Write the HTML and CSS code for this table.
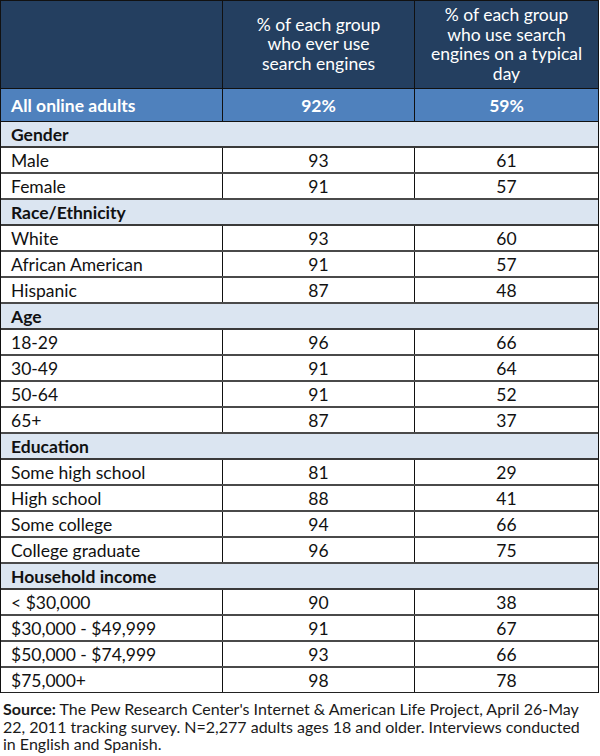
FILE: index.html
```html
<!DOCTYPE html>
<html>
<head>
<meta charset="utf-8">
<link rel="stylesheet" href="styles.css">
</head>
<body>
<div class="table">
  <div class="row head">
    <div class="cell"></div>
    <div class="cell">% of each group<br>who ever use<br>search engines</div>
    <div class="cell">% of each group<br>who use search<br>engines on a typical<br>day</div>
  </div>
  <div class="row total"><div class="cell">All online adults</div><div class="cell">92%</div><div class="cell">59%</div></div>
  <div class="row cat"><div class="cell">Gender</div></div>
  <div class="row"><div class="cell">Male</div><div class="cell">93</div><div class="cell">61</div></div>
  <div class="row"><div class="cell">Female</div><div class="cell">91</div><div class="cell">57</div></div>
  <div class="row cat"><div class="cell">Race/Ethnicity</div></div>
  <div class="row"><div class="cell">White</div><div class="cell">93</div><div class="cell">60</div></div>
  <div class="row"><div class="cell">African American</div><div class="cell">91</div><div class="cell">57</div></div>
  <div class="row"><div class="cell">Hispanic</div><div class="cell">87</div><div class="cell">48</div></div>
  <div class="row cat"><div class="cell">Age</div></div>
  <div class="row"><div class="cell">18-29</div><div class="cell">96</div><div class="cell">66</div></div>
  <div class="row"><div class="cell">30-49</div><div class="cell">91</div><div class="cell">64</div></div>
  <div class="row"><div class="cell">50-64</div><div class="cell">91</div><div class="cell">52</div></div>
  <div class="row"><div class="cell">65+</div><div class="cell">87</div><div class="cell">37</div></div>
  <div class="row cat"><div class="cell">Education</div></div>
  <div class="row"><div class="cell">Some high school</div><div class="cell">81</div><div class="cell">29</div></div>
  <div class="row"><div class="cell">High school</div><div class="cell">88</div><div class="cell">41</div></div>
  <div class="row"><div class="cell">Some college</div><div class="cell">94</div><div class="cell">66</div></div>
  <div class="row"><div class="cell">College graduate</div><div class="cell">96</div><div class="cell">75</div></div>
  <div class="row cat"><div class="cell">Household income</div></div>
  <div class="row"><div class="cell">&lt; $30,000</div><div class="cell">90</div><div class="cell">38</div></div>
  <div class="row"><div class="cell">$30,000 - $49,999</div><div class="cell">91</div><div class="cell">67</div></div>
  <div class="row"><div class="cell">$50,000 - $74,999</div><div class="cell">93</div><div class="cell">66</div></div>
  <div class="row last"><div class="cell">$75,000+</div><div class="cell">98</div><div class="cell">78</div></div>
</div>
<p class="source"><b>Source:</b> The Pew Research Center's Internet &amp; American Life Project, April 26-May 22, 2011 tracking survey. N=2,277 adults ages 18 and older. Interviews conducted in English and Spanish.</p>
</body>
</html>
```
FILE: styles.css
```css
html, body {
  margin: 0;
  padding: 0;
  background: #ffffff;
}
body {
  font-family: Lato, "Open Sans", "Liberation Sans", sans-serif;
  color: #111111;
  width: 600px;
}
.table {
  width: 599px;
  box-sizing: border-box;
  border: 1px solid #111;
  border-bottom: none;
  font-size: 17.5px;
}
.row {
  display: grid;
  grid-template-columns: 221px 192px 184px;
  height: 26px;
  box-sizing: border-box;
  border-bottom: 2px solid #4a4a4a;
}
.cell {
  display: flex;
  align-items: center;
  padding-left: 10px;
  white-space: nowrap;
}
.cell + .cell {
  justify-content: center;
  text-align: center;
  padding-left: 0;
  border-left: 1px solid #111;
}
.head {
  height: 88px;
  background: #243f60;
  color: #ffffff;
  border-bottom: 1px solid #111;
  line-height: 19.5px;
}
.head .cell + .cell {
  padding-bottom: 1px;
}
.total {
  height: 33px;
  background: #4f81bd;
  color: #ffffff;
  font-weight: bold;
  border-bottom: 1px solid #111;
}
.cat {
  display: flex;
  background: #dbe5f1;
  font-weight: bold;
  border-bottom: 2px solid #3a3a3a;
}
.last {
  border-bottom: 1px solid #222;
  height: 25px;
}
.source {
  margin: 7px 0 0 3px;
  font-size: 16px;
  line-height: 17.5px;
  color: #1a1a1a;
  width: 590px;
}
```
